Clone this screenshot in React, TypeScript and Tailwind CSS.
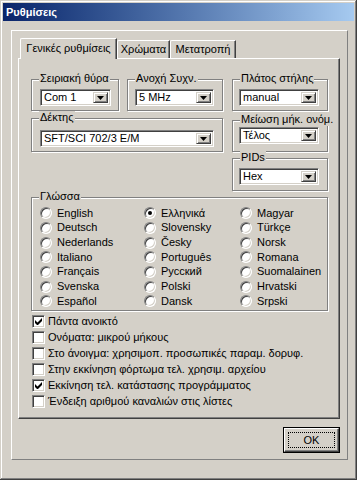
import React from "react";

const font = { fontFamily: '"Liberation Sans", Arial, sans-serif' };

function Arrow() {
  return (
    <svg width="7" height="4" viewBox="0 0 7 4">
      <path d="M0 0h7L3.5 4z" fill="#000" />
    </svg>
  );
}

function Combo({ value, w }: { value: string; w: string }) {
  return (
    <div
      className={`${w} h-[17px] flex bg-white border border-t-[#808080] border-l-[#808080] border-r-white border-b-white shadow-[inset_1px_1px_0_#404040,inset_-1px_-1px_0_#d4d0c8] p-[2px]`}
    >
      <div className="flex-1 pl-[1px] leading-[11px] text-[11px] text-black truncate">{value}</div>
      <div className="w-[15px] h-[11px] -mt-[0px] flex items-center justify-center bg-[#d4d0c8] border border-t-[#d4d0c8] border-l-[#d4d0c8] border-r-[#404040] border-b-[#404040] shadow-[inset_1px_1px_0_#fff,inset_-1px_-1px_0_#808080]">
        <Arrow />
      </div>
    </div>
  );
}

function Group({ label, className, children }: { label: string; className: string; children?: React.ReactNode }) {
  return (
    <div className={`relative border border-[#808080] shadow-[1px_1px_0_#fff,inset_1px_1px_0_#fff] ${className}`}>
      <span className="absolute left-[7px] -top-[8px] px-[1px] bg-[#d4d0c8] leading-[13px] text-[11px] text-black whitespace-nowrap">
        {label}
      </span>
      {children}
    </div>
  );
}

function Radio({ label, on }: { label: string; on?: boolean }) {
  return (
    <div className="h-[14.67px] flex items-center gap-[5px] text-[11px] text-black whitespace-nowrap">
      <div className="w-[12px] h-[12px] shrink-0 rounded-full flex items-center justify-center bg-white border border-t-[#808080] border-l-[#808080] border-r-white border-b-white shadow-[inset_1px_1px_0_#404040,inset_-1px_-1px_0_#d4d0c8]">
        {on && <div className="w-[4px] h-[4px] rounded-full bg-black" />}
      </div>
      <span className="leading-[13px]">{label}</span>
    </div>
  );
}

function Check({ label, on }: { label: string; on?: boolean }) {
  return (
    <div className="h-[16px] flex items-center gap-[3px] text-[11px] text-black whitespace-nowrap">
      <div className="w-[13px] h-[13px] shrink-0 flex items-center justify-center bg-white border border-t-[#808080] border-l-[#808080] border-r-white border-b-white shadow-[inset_1px_1px_0_#404040,inset_-1px_-1px_0_#d4d0c8]">
        {on && (
          <svg width="7" height="7" viewBox="0 0 7 7">
            <path d="M0 2v3l2 2h1l4-4V0L2.5 4.5z" fill="#000" />
          </svg>
        )}
      </div>
      <span className="leading-[13px]">{label}</span>
    </div>
  );
}

const col1 = ["English", "Deutsch", "Nederlands", "Italiano", "Français", "Svenska", "Español"];
const col2 = ["Ελληνικά", "Slovensky", "Česky", "Português", "Русский", "Polski", "Dansk"];
const col3 = ["Magyar", "Türkçe", "Norsk", "Romana", "Suomalainen", "Hrvatski", "Srpski"];

export default function App() {
  return (
    <div
      style={font}
      className="w-[357px] h-[480px] bg-[#d4d0c8] p-[3px] shadow-[inset_-1px_-1px_0_#404040,inset_1px_1px_0_#d4d0c8,inset_-2px_-2px_0_#808080,inset_2px_2px_0_#fff] overflow-hidden"
    >
      {/* title bar */}
      <div className="h-[18px] flex items-center pl-[3px] bg-gradient-to-r from-[#0a246a] to-[#a6caf0]">
        <span className="text-white font-bold text-[11px] leading-[13px]">Ρυθμίσεις</span>
      </div>

      {/* frame */}
      <div className="ml-[8px] mt-[9px] w-[337px] h-[430px] border border-t-white border-l-white border-r-[#808080] border-b-[#808080] pl-[6px] pt-[7px] flex flex-col">
        {/* tabs */}
        <div className="h-[20px] flex items-end pl-[2px] text-[11px] text-black">
          <div className="relative z-10 -mb-px h-[21px] w-[97px] flex items-center justify-center bg-[#d4d0c8] border-l border-t border-r border-l-white border-t-white border-r-[#404040] rounded-tl-[2px] shadow-[inset_-1px_0_0_#808080] pb-[1px]">
            Γενικές ρυθμίσεις
          </div>
          <div className="h-[18px] w-[53px] flex items-center justify-center border-l border-t border-r border-l-white border-t-white border-r-[#404040] rounded-tl-[2px] shadow-[inset_-1px_0_0_#808080]">
            Χρώματα
          </div>
          <div className="h-[18px] w-[66px] flex items-center justify-center border-l border-t border-r border-l-white border-t-white border-r-[#404040] rounded-tl-[2px] shadow-[inset_-1px_0_0_#808080]">
            Μετατροπή
          </div>
        </div>

        {/* panel */}
        <div className="w-[322px] h-[361px] border border-t-white border-l-white border-r-[#404040] border-b-[#404040] shadow-[inset_-1px_-1px_0_#808080] pl-[12px] pt-[20px]">
          <div className="flex gap-[9px]">
            <div className="w-[192px]">
              <div className="flex gap-[8px]">
                <Group label="Σειριακή θύρα" className="w-[88px] h-[32px] pt-[9px] pl-[8px]">
                  <Combo value="Com 1" w="w-[71px]" />
                </Group>
                <Group label="Ανοχή Συχν." className="w-[96px] h-[32px] pt-[9px] pl-[7px]">
                  <Combo value="5 MHz" w="w-[79px]" />
                </Group>
              </div>
              <Group label="Δέκτης" className="mt-[7px] w-[192px] h-[34px] pt-[11px] pl-[8px]">
                <Combo value="SFT/SCI 702/3 E/M" w="w-[174px]" />
              </Group>
            </div>
            <div className="w-[96px]">
              <Group label="Πλάτος στήλης" className="w-[96px] h-[32px] pt-[9px] pl-[6px]">
                <Combo value="manual" w="w-[80px]" />
              </Group>
              <Group label="Μείωση μήκ. ονόμ." className="mt-[9px] w-[96px] h-[32px] pt-[6px] pl-[6px]">
                <Combo value="Τέλος" w="w-[80px]" />
              </Group>
              <Group label="PIDs" className="mt-[6px] w-[96px] h-[33px] pt-[9px] pl-[6px]">
                <Combo value="Hex" w="w-[80px]" />
              </Group>
            </div>
          </div>

          <Group label="Γλώσσα" className="mt-[6px] w-[297px] h-[114px] pt-[8px] pl-[8px] flex">
            <div className="w-[104px]">
              {col1.map((l) => (
                <Radio key={l} label={l} />
              ))}
            </div>
            <div className="w-[96px]">
              {col2.map((l) => (
                <Radio key={l} label={l} on={l === "Ελληνικά"} />
              ))}
            </div>
            <div>
              {col3.map((l) => (
                <Radio key={l} label={l} />
              ))}
            </div>
          </Group>

          <div className="mt-[2px] pl-[1px]">
            <Check label="Πάντα ανοικτό" on />
            <Check label="Ονόματα: μικρού μήκους" />
            <Check label="Στο άνοιγμα: χρησιμοπ. προσωπικές παραμ. δορυφ." />
            <Check label="Στην εκκίνηση φόρτωμα τελ. χρησιμ. αρχείου" />
            <Check label="Εκκίνηση τελ. κατάστασης προγράμματος" on />
            <Check label="Ένδειξη αριθμού καναλιών στις λίστες" />
          </div>
        </div>

        {/* OK */}
        <div className="w-[322px] flex justify-end mt-[8px]">
          <button className="w-[57px] h-[26px] border border-black p-0 bg-[#d4d0c8] text-[11px] text-black">
            <div className="w-full h-full border border-t-white border-l-white border-r-[#404040] border-b-[#404040] shadow-[inset_-1px_-1px_0_#808080] p-[3px]">
              <div className="w-full h-full border border-dotted border-black flex items-center justify-center leading-[13px]">
                OK
              </div>
            </div>
          </button>
        </div>
      </div>
    </div>
  );
}
